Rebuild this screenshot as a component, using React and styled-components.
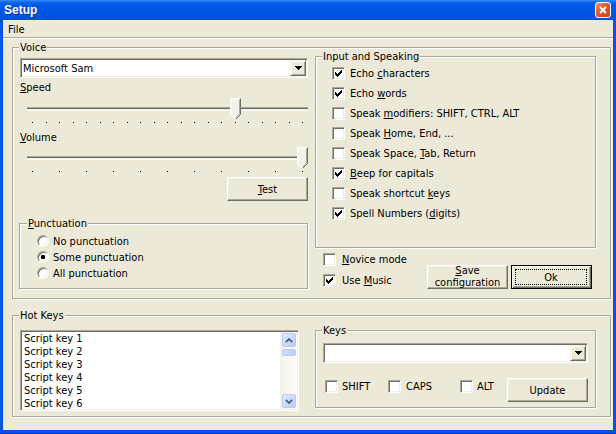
import React from 'react';
import styled, { createGlobalStyle } from 'styled-components';

const BEIGE = '#ECE9D8';

const GlobalStyle = createGlobalStyle`
  html, body { margin: 0; padding: 0; background: #fff; }
  body {
    font-family: "DejaVu Sans Condensed", "DejaVu Sans", sans-serif;
    font-stretch: condensed;
    font-size: 11px;
    color: #000;
  }
  * { box-sizing: border-box; }
  u { text-decoration: underline; text-underline-offset: 1px; }
`;

const Window = styled.div`
  width: 616px;
  height: 434px;
  display: flex;
  flex-direction: column;
  background: #0055E5;
  border-bottom: 1px solid #0831D9;
`;

const TitleBar = styled.div`
  height: 20px;
  flex: none;
  display: flex;
  align-items: center;
  justify-content: space-between;
  padding: 0 5px 0 4px;
  background: linear-gradient(#3C8EF9 0, #1168ED 2px, #0058E8 5px, #0055E5 60%, #0050DA 100%);
`;

const Title = styled.span`
  color: #fff;
  font-family: "Liberation Sans", Arial, sans-serif;
  font-stretch: normal;
  font-weight: bold;
  font-size: 12px;
  text-shadow: 1px 1px 0 #0A2F9E;
`;

const CloseBtn = styled.div`
  width: 16px;
  height: 16px;
  border: 1px solid #fff;
  border-radius: 3px;
  display: grid;
  place-items: center;
  background: linear-gradient(135deg, #F0906E 0%, #E35C36 40%, #CC4114 100%);
`;

const Body = styled.div`
  flex: 1;
  margin: 0 3px 3px 3px;
  background: ${BEIGE};
  display: flex;
  flex-direction: column;
`;

const MenuBar = styled.div`
  height: 17px;
  display: flex;
  align-items: center;
  padding: 2px 0 0 5px;
  line-height: 13px;
`;

const Separator = styled.div`
  height: 2px;
  border-top: 1px solid #ACA899;
  border-bottom: 1px solid #fff;
`;

const Content = styled.div`
  display: flex;
  flex-direction: column;
  padding: 0 2px 0 9px;
`;

const Group = styled.div`
  display: flex;
  flex-direction: column;
  border: 1px solid #ACA899;
  box-shadow: inset 1px 1px 0 #fff, 1px 1px 0 #fff;
  padding: ${p => p.$pad || '0'};
  margin: ${p => p.$margin || '0'};
  width: ${p => (p.$w ? `${p.$w}px` : 'auto')};
  flex: none;
`;

const Legend = styled.div`
  align-self: flex-start;
  margin: -7px 0 0 ${p => p.$ml ?? 6}px;
  padding: 0 1px;
  height: 13px;
  line-height: 13px;
  background: ${BEIGE};
`;

const Row = styled.div`
  display: flex;
  align-items: flex-start;
  gap: ${p => p.$gap || 0}px;
`;

const Column = styled.div`
  display: flex;
  flex-direction: column;
  width: ${p => p.$w}px;
  flex: none;
`;

const sunken = `
  border: 1px solid;
  border-color: #ACA899 #fff #fff #ACA899;
  box-shadow: inset 1px 1px 0 #716F64, inset -1px -1px 0 #F1EFE2;
`;

const ComboBox = styled.div`
  ${sunken}
  height: 20px;
  width: 100%;
  margin-top: ${p => p.$mt || 0}px;
  background: #fff;
  display: flex;
  align-items: center;
  padding: 1px;
`;

const ComboText = styled.div`
  flex: 1;
  padding-left: 1px;
  line-height: 13px;
  white-space: nowrap;
`;

const DropBtn = styled.div`
  width: 16px;
  height: 16px;
  flex: none;
  background: ${BEIGE};
  border: 1px solid;
  border-color: #F1EFE2 #716F64 #716F64 #F1EFE2;
  box-shadow: inset 1px 1px 0 #fff, inset -1px -1px 0 #ACA899;
  display: grid;
  place-items: center;
`;

const Label = styled.div`
  line-height: 13px;
  height: 13px;
  margin-top: ${p => p.$mt || 0}px;
  white-space: nowrap;
`;

const SliderBox = styled.div`
  position: relative;
  width: 281px;
  margin: ${p => p.$mt || 0}px 0 0 7px;
  display: flex;
  flex-direction: column;
`;

const Track = styled.div`
  margin-top: 9px;
  height: 4px;
  background: linear-gradient(#ACA899 0 1px, #716F64 1px 2px, #F1EFE2 2px 3px, #fff 3px 4px);
`;

const Ticks = styled.div`
  margin-top: 11px;
  height: 1px;
  padding: 0 5px;
  display: flex;
  justify-content: space-between;
`;

const Dot = styled.span`
  width: 1px;
  height: 1px;
  background: #000;
`;

const Thumb = styled.svg`
  position: absolute;
  top: 0;
  width: 11px;
  height: 22px;
`;

const Button = styled.div`
  width: 81px;
  height: 24px;
  flex: none;
  align-self: ${p => p.$self || 'auto'};
  margin-top: ${p => p.$mt || 0}px;
  background: ${BEIGE};
  border: 1px solid;
  border-color: #fff #716F64 #716F64 #fff;
  box-shadow: inset -1px -1px 0 #ACA899, inset 1px 1px 0 #F1EFE2;
  display: flex;
  align-items: center;
  justify-content: center;
  line-height: 13px;
  white-space: nowrap;
`;

const DefaultButton = styled.div`
  width: 81px;
  height: 24px;
  flex: none;
  margin-top: ${p => p.$mt || 0}px;
  background: ${BEIGE};
  border: 1px solid #000;
  box-shadow: inset 1px 1px 0 #fff, inset -1px -1px 0 #716F64, inset -2px -2px 0 #ACA899;
  display: flex;
  padding: 3px 4px 3px 3px;
`;

const FocusRect = styled.div`
  flex: 1;
  border: 1px dotted #000;
  display: flex;
  align-items: center;
  justify-content: center;
  line-height: 13px;
`;

const TwoLineButton = styled(Button)`
  flex-direction: column;
  justify-content: flex-start;
  overflow: hidden;
  line-height: 12px;
`;

const ButtonLine = styled.span`
  display: block;
  height: 12px;
  flex: none;
  &:first-child { margin-top: -1px; }
`;

const RadioList = styled.div`
  display: flex;
  flex-direction: column;
  margin-top: 3px;
  padding-left: 17px;
`;

const OptionRow = styled.div`
  display: flex;
  align-items: center;
  gap: ${p => p.$gap || 5}px;
  height: ${p => p.$h || 16}px;
  width: ${p => (p.$w ? `${p.$w}px` : 'auto')};
  margin-top: ${p => p.$mt || 0}px;
  margin-left: ${p => p.$ml || 0}px;
  flex: none;
  line-height: 13px;
  white-space: nowrap;
`;

const RadioCircle = styled.div`
  width: 12px;
  height: 12px;
  border-radius: 50%;
  border: 1px solid;
  border-color: #ACA899 #fff #fff #ACA899;
  box-shadow: inset 1px 1px 0 #716F64, inset -1px -1px 0 #F1EFE2;
  background: #fff;
  display: grid;
  place-items: center;
  flex: none;
`;

const RadioDot = styled.div`
  width: 4px;
  height: 4px;
  border-radius: 1px;
  background: #000;
`;

const CheckSquare = styled.div`
  width: 13px;
  height: 13px;
  flex: none;
  ${sunken}
  background: #fff;
  display: grid;
  place-items: center;
`;

const CheckList = styled.div`
  display: flex;
  flex-direction: column;
  padding-left: 16px;
`;

const BottomRow = styled.div`
  display: flex;
  align-items: flex-start;
  margin-top: 1px;
  padding-left: 8px;
  gap: 3px;
`;

const OptionsColumn = styled.div`
  display: flex;
  flex-direction: column;
  width: 101px;
  flex: none;
`;

const ListBox = styled.div`
  ${sunken}
  width: 279px;
  height: 81px;
  margin-top: 8px;
  flex: none;
  background: #fff;
  display: flex;
  padding: 1px;
`;

const ListItems = styled.div`
  flex: 1;
  overflow: hidden;
  padding-left: 2px;
  display: flex;
  flex-direction: column;
`;

const ListItem = styled.div`
  line-height: 13px;
  height: 13px;
  flex: none;
  white-space: nowrap;
`;

const ScrollBar = styled.div`
  width: 17px;
  flex: none;
  display: flex;
  flex-direction: column;
  justify-content: space-between;
  padding: 1px 1px 1px 2px;
  background: linear-gradient(to right, #F3F1EC, #FEFEFB);
`;

const ScrollUpper = styled.div`
  display: flex;
  flex-direction: column;
  gap: 2px;
`;

const ArrowBtn = styled.div`
  height: 14px;
  border-radius: 2px;
  border: 1px solid #B7CAF5;
  background: linear-gradient(135deg, #E6EEFF 0%, #C9D8FC 60%, #B6CAF8 100%);
  display: grid;
  place-items: center;
`;

const ScrollThumb = styled.div`
  height: 7px;
  border-radius: 2px;
  border: 1px solid #B7CAF5;
  background: linear-gradient(to right, #D2DEFC, #BCCFFB);
`;

const KeysRow = styled.div`
  display: flex;
  align-items: flex-start;
  margin-top: 15px;
`;

const Check = ({ checked, children, ...rest }) => (
  <OptionRow {...rest}>
    <CheckSquare>
      {checked && (
        <svg width="7" height="7" viewBox="0 0 7 7">
          <path
            d="M0 2h1v3H0z M1 3h1v3H1z M2 4h1v3H2z M3 3h1v3H3z M4 2h1v3H4z M5 1h1v3H5z M6 0h1v3H6z"
            fill="#000"
          />
        </svg>
      )}
    </CheckSquare>
    <span>{children}</span>
  </OptionRow>
);

const Radio = ({ checked, children }) => (
  <OptionRow $gap={4}>
    <RadioCircle>{checked && <RadioDot />}</RadioCircle>
    <span>{children}</span>
  </OptionRow>
);

const Triangle = () => (
  <svg width="7" height="4" viewBox="0 0 7 4">
    <path d="M0 0h7v1H0z M1 1h5v1H1z M2 2h3v1H2z M3 3h1v1H3z" fill="#000" />
  </svg>
);

const Combo = ({ value, ...rest }) => (
  <ComboBox {...rest}>
    <ComboText>{value}</ComboText>
    <DropBtn>
      <Triangle />
    </DropBtn>
  </ComboBox>
);

const Slider = ({ value, max, ticks, mt }) => (
  <SliderBox $mt={mt}>
    <Track />
    <Ticks>
      {Array.from({ length: ticks }, (_, i) => (
        <Dot key={i} />
      ))}
    </Ticks>
    <Thumb viewBox="0 0 11 22" style={{ left: `${(value / max) * 270}px` }}>
      <path d="M0.5 0.5H10.5V16.5L5.5 21.5L0.5 16.5Z" fill="#F3F2EA" />
      <polyline points="0.5,16.5 0.5,0.5 10.5,0.5" fill="none" stroke="#fff" />
      <polyline points="1.5,16 1.5,1.5 9.5,1.5" fill="none" stroke="#F9F8F3" />
      <polyline points="10.5,0.5 10.5,16.5 5.5,21.5" fill="none" stroke="#716F64" />
      <polyline points="9.5,1.5 9.5,16 5.5,20" fill="none" stroke="#ACA899" />
      <polyline points="0.5,16.5 5.5,21.5" fill="none" stroke="#fff" />
    </Thumb>
  </SliderBox>
);

const Chevron = ({ up }) => (
  <svg width="8" height="5" viewBox="0 0 8 5">
    <polyline
      points={up ? '0.8,4.2 4,1 7.2,4.2' : '0.8,0.8 4,4 7.2,0.8'}
      fill="none"
      stroke="#4D6185"
      strokeWidth="1.8"
    />
  </svg>
);

export default function App() {
  return (
    <>
      <GlobalStyle />
      <Window>
        <TitleBar>
          <Title>Setup</Title>
          <CloseBtn>
            <svg width="8" height="8" viewBox="0 0 8 8">
              <path d="M1 1L7 7M7 1L1 7" stroke="#fff" strokeWidth="1.8" />
            </svg>
          </CloseBtn>
        </TitleBar>
        <Body>
          <MenuBar>File</MenuBar>
          <Separator />
          <Content>
            <Group $pad="0 14px 8px 7px" $margin="8px 0 0 0">
              <Legend $ml={-1}>Voice</Legend>
              <Row $gap={7}>
                <Column $w={288}>
                  <Combo value="Microsoft Sam" $mt={4} />
                  <Label $mt={3}>
                    <u>S</u>peed
                  </Label>
                  <Slider value={15} max={20} ticks={21} mt={4} />
                  <Label $mt={8}>
                    <u>V</u>olume
                  </Label>
                  <Slider value={10} max={10} ticks={11} mt={3} />
                  <Button $self="flex-end" $mt={5}>
                    <span>
                      <u>T</u>est
                    </span>
                  </Button>
                  <Group $margin="22px 0 0 -1px" $pad="0 0 7px 0" $w={289}>
                    <Legend $ml={7}>
                      <u>P</u>unctuation
                    </Legend>
                    <RadioList>
                      <Radio>No punctuation</Radio>
                      <Radio checked>Some punctuation</Radio>
                      <Radio>All punctuation</Radio>
                    </RadioList>
                  </Group>
                </Column>
                <Column $w={281}>
                  <Group $margin="2px 0 0 0" $pad="0 0 24px 0">
                    <Legend>Input and Speaking</Legend>
                    <CheckList>
                      <Check checked $h={20}>
                        Echo <u>c</u>haracters
                      </Check>
                      <Check checked $h={20}>
                        Echo <u>w</u>ords
                      </Check>
                      <Check $h={20}>
                        Speak <u>m</u>odifiers: SHIFT, CTRL, ALT
                      </Check>
                      <Check $h={20}>
                        Speak <u>H</u>ome, End, ...
                      </Check>
                      <Check $h={20}>
                        Speak Space, <u>T</u>ab, Return
                      </Check>
                      <Check checked $h={20}>
                        <u>B</u>eep for capitals
                      </Check>
                      <Check $h={20}>
                        Speak shortcut <u>k</u>eys
                      </Check>
                      <Check checked $h={20}>
                        Spell Numbers (<u>d</u>igits)
                      </Check>
                    </CheckList>
                  </Group>
                  <BottomRow>
                    <OptionsColumn>
                      <Check $h={20} $gap={6}>
                        <u>N</u>ovice mode
                      </Check>
                      <Check checked $h={20} $gap={6} $mt={1}>
                        Use <u>M</u>usic
                      </Check>
                    </OptionsColumn>
                    <TwoLineButton $mt={16}>
                      <ButtonLine>
                        <u>S</u>ave
                      </ButtonLine>
                      <ButtonLine>configuration</ButtonLine>
                    </TwoLineButton>
                    <DefaultButton $mt={16}>
                      <FocusRect>Ok</FocusRect>
                    </DefaultButton>
                  </BottomRow>
                </Column>
              </Row>
            </Group>

            <Group $pad="0 14px 5px 7px" $margin="16px 0 0 0">
              <Legend $ml={-1}>Hot Keys</Legend>
              <Row $gap={16}>
                <ListBox>
                  <ListItems>
                    {[1, 2, 3, 4, 5, 6].map(n => (
                      <ListItem key={n}>Script key {n}</ListItem>
                    ))}
                  </ListItems>
                  <ScrollBar>
                    <ScrollUpper>
                      <ArrowBtn>
                        <Chevron up />
                      </ArrowBtn>
                      <ScrollThumb />
                    </ScrollUpper>
                    <ArrowBtn>
                      <Chevron />
                    </ArrowBtn>
                  </ScrollBar>
                </ListBox>
                <Group $pad="0 7px 5px 7px" $margin="8px 0 0 0" $w={281}>
                  <Legend $ml={-1}>Keys</Legend>
                  <Combo value="" $mt={6} />
                  <KeysRow>
                    <Check $w={63} $ml={2} $mt={2} $h={13} $gap={4}>
                      SHIFT
                    </Check>
                    <Check $w={72} $mt={2} $h={13} $gap={5}>
                      CAPS
                    </Check>
                    <Check $w={47} $mt={2} $h={13} $gap={4}>
                      ALT
                    </Check>
                    <Button>Update</Button>
                  </KeysRow>
                </Group>
              </Row>
            </Group>
          </Content>
        </Body>
      </Window>
    </>
  );
}
